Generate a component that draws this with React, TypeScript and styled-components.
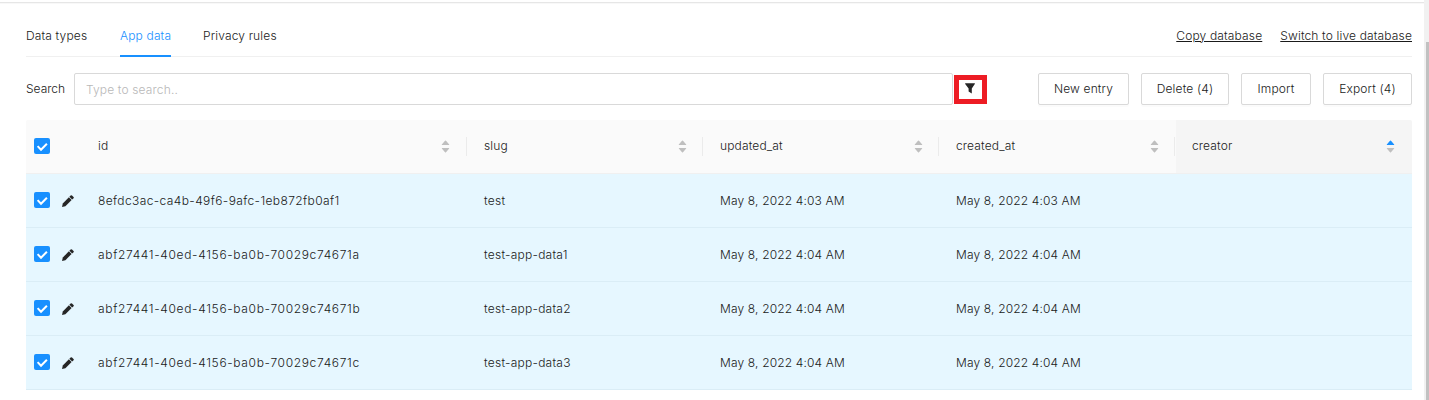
import React from "react";
import styled, { createGlobalStyle } from "styled-components";

const Global = createGlobalStyle`
  * { box-sizing: border-box; }
  body { margin: 0; background: #fff; overflow: hidden; }
`;

const Page = styled.div`
  display: flex;
  height: 400px;
  font-family: Inter, "Liberation Sans", sans-serif;
  font-size: 12px;
  font-weight: 350;
  line-height: 20px;
  letter-spacing: 0.15px;
  color: #1a1a1a;
`;

const Main = styled.main`
  flex: 1;
  display: flex;
  flex-direction: column;
`;

const TopEdge = styled.div`
  height: 4px;
  border-bottom: 1px solid #f8f8f8;
  background: linear-gradient(#fff 2px, #e6e6e6 2px);
`;

const Content = styled.div`
  padding: 0 12px 0 26px;
`;

const TabBar = styled.nav`
  display: flex;
  height: 53px;
  padding-top: 12px;
  border-bottom: 1px solid #f0f0f0;
`;

const Label = styled.span<{ $spacing?: number }>`
  letter-spacing: ${(p) => p.$spacing ?? 0.15}px;
  white-space: nowrap;
`;

const Tab = styled.div<{ $active?: boolean; $width: number }>`
  height: 41px;
  width: ${(p) => p.$width}px;
  margin-right: 32px;
  padding-top: 10px;
  white-space: nowrap;
  color: ${(p) => (p.$active ? "#1890ff" : "inherit")};
  border-bottom: 2px solid ${(p) => (p.$active ? "#1890ff" : "transparent")};
`;

const Links = styled.div`
  display: flex;
  gap: 18px;
  margin-left: auto;
  padding-top: 10px;
`;

const Link = styled.a`
  text-decoration: underline 1px;
  text-underline-offset: 1px;
  white-space: nowrap;
`;

const Toolbar = styled.div`
  display: flex;
  align-items: center;
  height: 32px;
  margin: 16px 0 15px;
`;

const SearchLabel = styled.label`
  width: 48px;
  letter-spacing: 0;
`;

const SearchInput = styled.input`
  width: 879px;
  height: 32px;
  padding: 0 11px;
  border: 1px solid #d9d9d9;
  border-radius: 2px;
  font: inherit;
  letter-spacing: inherit;
  outline: none;
  &::placeholder { color: #b8b8b8; opacity: 1; }
`;

const FilterButton = styled.button`
  display: flex;
  align-items: center;
  justify-content: center;
  width: 33px;
  height: 29px;
  margin: 1px 0 0 1px;
  padding: 0 1px 2px 0;
  border: 5px solid #ed1c24;
  background: #fff;
`;

const Actions = styled.div`
  display: flex;
  gap: 12px;
  margin-left: auto;
`;

const ActionButton = styled.button<{ $width: number }>`
  width: ${(p) => p.$width}px;
  height: 32px;
  padding: 0;
  border: 1px solid #d9d9d9;
  border-radius: 2px;
  background: #fff;
  box-shadow: 0 2px 0 rgba(0, 0, 0, 0.015);
  color: inherit;
  font: inherit;
  letter-spacing: inherit;
  white-space: nowrap;
`;

const Row = styled.div<{ $head?: boolean }>`
  display: grid;
  grid-template-columns: 56px 386px repeat(4, 236px);
  height: 54px;
  background: ${(p) => (p.$head ? "#fafafa" : "#e6f7ff")};
  border-bottom: 1px solid ${(p) => (p.$head ? "#f0f0f0" : "#daedf6")};
  border-radius: ${(p) => (p.$head ? "2px 2px 0 0" : "0")};
  overflow: hidden;
`;

const SelectCell = styled.div`
  display: flex;
  align-items: center;
  gap: 12px;
  padding: 0 0 1px 8px;
`;

const Cell = styled.div`
  display: flex;
  align-items: center;
  padding: 0 16px;
`;

const HeadCell = styled(Cell)<{ $sorted?: boolean; $divider?: boolean }>`
  justify-content: space-between;
  padding-bottom: 1px;
  background: ${(p) =>
    p.$sorted
      ? "#f5f5f5"
      : p.$divider
        ? "linear-gradient(#ebebeb, #ebebeb) no-repeat right 1px top 17px / 1px 19px"
        : "none"};
`;

const CheckBox = styled.span`
  display: flex;
  width: 16px;
  height: 16px;
  border-radius: 2px;
  background: #1890ff;
`;

const Scrollbar = styled.div`
  width: 5px;
  padding: 42px 0 0 2px;
  background: #f1f1f1;
`;

const Thumb = styled.div`
  height: 358px;
  background: #c1c1c1;
`;

const Checked = () => (
  <CheckBox>
    <svg width="16" height="16" viewBox="0 0 16 16" fill="none" stroke="#fff" strokeWidth="2">
      <path d="M3.6 8.1 7 11.7 12.9 5.7" />
    </svg>
  </CheckBox>
);

const PencilIcon = styled.svg`
  margin-top: 1px;
  fill: #262626;
`;

const Pencil = () => (
  <PencilIcon width="12" height="12" viewBox="0 0 12 12">
    <path d="M0 12 .8 8.6 6.9 2.2 9.6 4.9 3.4 11.2Z" />
    <path d="M7.4 1.7 8.6.4Q9.3-.1 10 .5L11.5 2Q12.1 2.7 11.5 3.3L10.1 4.4Z" />
  </PencilIcon>
);

const Funnel = () => (
  <svg width="10" height="11" viewBox="0 0 10 11" fill="#262626">
    <path d="M.4.2H9.6Q10.2.5 9.8 1L6.8 5.6V10.6L3.6 8.6V5.6L.2 1Q-.1.5.4.2Z" />
  </svg>
);

const SorterIcon = styled.svg<{ $shift: number }>`
  margin: 2px ${(p) => p.$shift}px 0 0;
`;

const Sorter = ({ asc = false, shift = 0 }: { asc?: boolean; shift?: number }) => (
  <SorterIcon $shift={shift} width="11" height="14" viewBox="0 0 11 14">
    <path d="M5 .8Q5.5.2 6 .8L9.2 4.4Q9.4 5 8.8 5H2.2Q1.6 5 1.8 4.4Z" fill={asc ? "#1890ff" : "#bfbfbf"} />
    <path d="M5 12.2Q5.5 12.8 6 12.2L9.2 8.6Q9.4 8 8.8 8H2.2Q1.6 8 1.8 8.6Z" fill="#bfbfbf" />
  </SorterIcon>
);

const columns = ["id", "slug", "updated_at", "created_at", "creator"];
const entries = [
  { id: "8efdc3ac-ca4b-49f6-9afc-1eb872fb0af1", slug: "test", at: "May 8, 2022 4:03 AM" },
  { id: "abf27441-40ed-4156-ba0b-70029c74671a", slug: "test-app-data1", at: "May 8, 2022 4:04 AM" },
  { id: "abf27441-40ed-4156-ba0b-70029c74671b", slug: "test-app-data2", at: "May 8, 2022 4:04 AM" },
  { id: "abf27441-40ed-4156-ba0b-70029c74671c", slug: "test-app-data3", at: "May 8, 2022 4:04 AM" },
];

export default function App() {
  return (
    <Page>
      <Global />
      <Main>
        <TopEdge />
        <Content>
          <TabBar>
            <Tab $width={62}>Data types</Tab>
            <Tab $width={51} $active>App data</Tab>
            <Tab $width={73}>Privacy rules</Tab>
            <Links>
              <Link>Copy database</Link>
              <Link>Switch to live database</Link>
            </Links>
          </TabBar>
          <Toolbar>
            <SearchLabel>Search</SearchLabel>
            <SearchInput placeholder="Type to search.." />
            <FilterButton><Funnel /></FilterButton>
            <Actions>
              <ActionButton $width={91}>New entry</ActionButton>
              <ActionButton $width={88}>Delete (4)</ActionButton>
              <ActionButton $width={70}>Import</ActionButton>
              <ActionButton $width={89}>Export (4)</ActionButton>
            </Actions>
          </Toolbar>
          <Row $head>
            <SelectCell><Checked /></SelectCell>
            {columns.map((c, i) => (
              <HeadCell key={c} $sorted={i === 4} $divider={i < 4}>
                <Label>{c}</Label>
                <Sorter asc={i === 4} shift={i === 0 ? 1 : 0} />
              </HeadCell>
            ))}
          </Row>
          {entries.map((e, i) => (
            <Row key={e.id}>
              <SelectCell><Checked /><Pencil /></SelectCell>
              <Cell><Label $spacing={i ? 0.66 : 0.39}>{e.id}</Label></Cell>
              <Cell><Label $spacing={0.25}>{e.slug}</Label></Cell>
              <Cell><Label>{e.at}</Label></Cell>
              <Cell><Label>{e.at}</Label></Cell>
              <Cell />
            </Row>
          ))}
        </Content>
      </Main>
      <Scrollbar><Thumb /></Scrollbar>
    </Page>
  );
}
